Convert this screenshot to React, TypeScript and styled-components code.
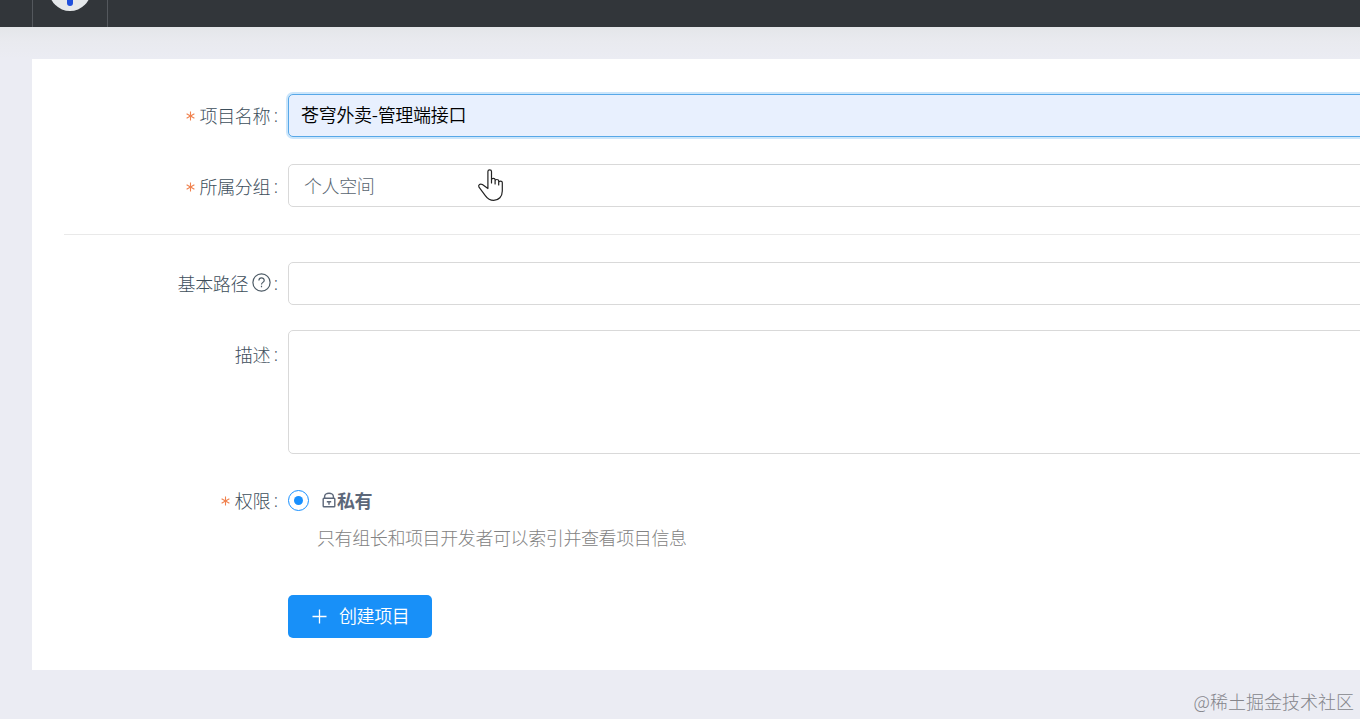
import React from "react";
import styled, { createGlobalStyle } from "styled-components";

const Global = createGlobalStyle`
  * { box-sizing: border-box; }
  body {
    margin: 0;
    overflow: hidden;
    background: #ebecf3;
    font-family: "Noto Sans CJK SC", sans-serif;
    font-size: 18px;
    letter-spacing: -0.4px;
    font-weight: 300;
    color: #3d4e5b;
  }
`;

const Page = styled.div`
  position: relative;
  display: flex;
  flex-direction: column;
  height: 719px;
  overflow: hidden;
`;

const Header = styled.header`
  flex: none;
  display: flex;
  height: 27px;
  padding-left: 32px;
  background: #32363a;
`;

const LogoCell = styled.div`
  width: 76px;
  height: 27px;
  border-left: 1px solid #54585d;
  border-right: 1px solid #54585d;
  svg { display: block; }
`;

const Main = styled.main`
  flex: 1;
  padding: 32px 0 49px 32px;
  background: linear-gradient(#e4e6e9 0, #e9eaef 14px, #ebecf3 32px);
`;

const Card = styled.form`
  display: flex;
  flex-direction: column;
  height: 611px;
  padding: 35px 0 32px 32px;
  background: #fff;
  overflow: hidden;
`;

const Row = styled.div<{ $gap?: number }>`
  display: flex;
  align-items: flex-start;
  margin-bottom: ${(p) => p.$gap ?? 27}px;
`;

const Label = styled.div<{ $top?: number }>`
  flex: none;
  display: flex;
  justify-content: flex-end;
  align-items: center;
  width: 224px;
  height: 42px;
  margin-top: ${(p) => p.$top ?? 0}px;
  padding-right: 10px;
  white-space: nowrap;
`;

const Star = styled.svg`
  margin: 1px 5px 0 0;
`;

const Help = styled.svg`
  margin: 0 -1px 1px 4px;
`;

const Colon = styled.span`
  width: 8px;
  text-align: right;
  letter-spacing: 0;
  font-family: "Open Sans", "Noto Sans", sans-serif;
`;

const Field = styled.div<{ $focused?: boolean; $height?: number; $indent?: number }>`
  flex: none;
  width: 1120px;
  height: ${(p) => p.$height ?? 43}px;
  padding-left: ${(p) => p.$indent ?? 12}px;
  line-height: ${(p) => (p.$focused ? 39 : 41)}px;
  border: 1px solid ${(p) => (p.$focused ? "#57a8e8" : "#d9d9d9")};
  border-radius: 5px;
  background: ${(p) => (p.$focused ? "#e8f0fe" : "#fff")};
  color: ${(p) => (p.$focused ? "#000" : "#596570")};
  font-weight: ${(p) => (p.$focused ? 350 : 300)};
  letter-spacing: ${(p) => (p.$focused ? -0.3 : -0.4)}px;
  box-shadow: ${(p) => (p.$focused ? "0 0 0 2px #cce6fb" : "none")};
`;

const Divider = styled.hr`
  flex: none;
  width: 100%;
  height: 1px;
  margin: 0 0 27px;
  border: 0;
  background: #e9e9e9;
`;

const Access = styled.div`
  display: flex;
  flex-direction: column;
`;

const Option = styled.div`
  display: flex;
  align-items: center;
  height: 42px;
  font-weight: 700;
  color: #5c6779;
`;

const Radio = styled.span`
  display: flex;
  align-items: center;
  justify-content: center;
  width: 21px;
  height: 21px;
  margin-right: 13px;
  border: 1px solid #1890ff;
  border-radius: 50%;
  &::after {
    content: "";
    width: 9px;
    height: 9px;
    border-radius: 50%;
    background: #1890ff;
  }
`;

const Hint = styled.div`
  height: 33px;
  padding-left: 29px;
  line-height: 33px;
  color: #828282;
`;

const Submit = styled.button`
  display: flex;
  align-items: center;
  width: 144px;
  height: 43px;
  margin: 0 0 0 224px;
  padding: 0 0 0 24px;
  gap: 12px;
  border: 0;
  border-radius: 5px;
  background: #1890f8;
  color: #fff;
  font: inherit;
  font-weight: 350;
  letter-spacing: inherit;
  line-height: 41px;
  white-space: nowrap;
`;

const SubmitText = styled.span`
  height: 43px;
`;

const Cursor = styled.svg`
  position: absolute;
  left: 476px;
  top: 167px;
`;

const Watermark = styled.div`
  position: absolute;
  right: 6px;
  bottom: 4px;
  font-size: 18px;
  line-height: 28px;
  letter-spacing: 0;
  color: #85858b;
  white-space: nowrap;
`;

function Required() {
  return (
    <Star width="9" height="10" viewBox="0 0 9 10" fill="none" stroke="#f0824f" strokeWidth="1.1">
      <path d="M4.5 0.5v9M0.6 2.8l7.8 4.4M8.4 2.8L0.6 7.2" />
    </Star>
  );
}

export default function App() {
  return (
    <Page>
      <Global />
      <Header>
        <LogoCell>
          <svg width="74" height="27" viewBox="0 0 74 27">
            <circle cx="37" cy="-10" r="21" fill="#e5e8ea" />
            <path d="M37-6V3" stroke="#1f50dc" strokeWidth="6" strokeLinecap="round" />
          </svg>
        </LogoCell>
      </Header>
      <Main>
        <Card>
          <Row>
            <Label><Required />项目名称<Colon>:</Colon></Label>
            <Field $focused>苍穹外卖-管理端接口</Field>
          </Row>
          <Row>
            <Label $top={1}><Required />所属分组<Colon>:</Colon></Label>
            <Field $indent={15}>个人空间</Field>
          </Row>
          <Divider />
          <Row $gap={25}>
            <Label>
              基本路径
              <Help width="19" height="19" viewBox="0 0 19 19" fill="none" stroke="#4c5a65" strokeWidth="1.2">
                <circle cx="9.5" cy="9.5" r="8.6" />
                <path d="M6.9 7.6C6.9 4 12.2 4 12.2 7.4c0 2-2.7 2-2.7 4.1M9.5 12.7v1.5" />
              </Help>
              <Colon>:</Colon>
            </Label>
            <Field />
          </Row>
          <Row $gap={25}>
            <Label $top={3}>描述<Colon>:</Colon></Label>
            <Field $height={124} />
          </Row>
          <Row $gap={41}>
            <Label><Required />权限<Colon>:</Colon></Label>
            <Access>
              <Option>
                <Radio />
                <svg width="15" height="16" viewBox="0 0 15 16" fill="none" stroke="#5c6779" strokeWidth="1.4">
                  <rect x="1.2" y="6.2" width="11.6" height="8.6" rx="0.8" />
                  <path d="M2.6 6V4.4C2.6.2 11.4.2 11.4 4.4V6M7 9v3.8M4.8 9.8h4.4" />
                </svg>
                私有
              </Option>
              <Hint>只有组长和项目开发者可以索引并查看项目信息</Hint>
            </Access>
          </Row>
          <Submit type="button">
            <svg width="15" height="15" viewBox="0 0 15 15" fill="none" stroke="#fff" strokeWidth="1.3">
              <path d="M7.5 0.5v14M0.5 7.5h14" />
            </svg>
            <SubmitText>创建项目</SubmitText>
          </Submit>
        </Card>
      </Main>
      <Cursor width="30" height="36" viewBox="0 0 30 36" fill="#fff" stroke="#222" strokeWidth="1.2" strokeLinejoin="round" strokeLinecap="round">
        <path d="M11.9 21.5V4.6c0-2.4 3.6-2.4 3.6 0V16v-3.2c0-2 3.6-2 3.6 0V17v-3c0-2 3.6-2 3.6 0v4-2.6c0-1.8 3.6-1.8 3.6 0V24c0 5.5-3.6 9.4-8.6 9.4-4.1 0-6.2-1.7-8.4-4.8L3 20.2c-1.2-2.6 1.3-3.9 3.4-2.6z" />
      </Cursor>
      <Watermark>@稀土掘金技术社区</Watermark>
    </Page>
  );
}
